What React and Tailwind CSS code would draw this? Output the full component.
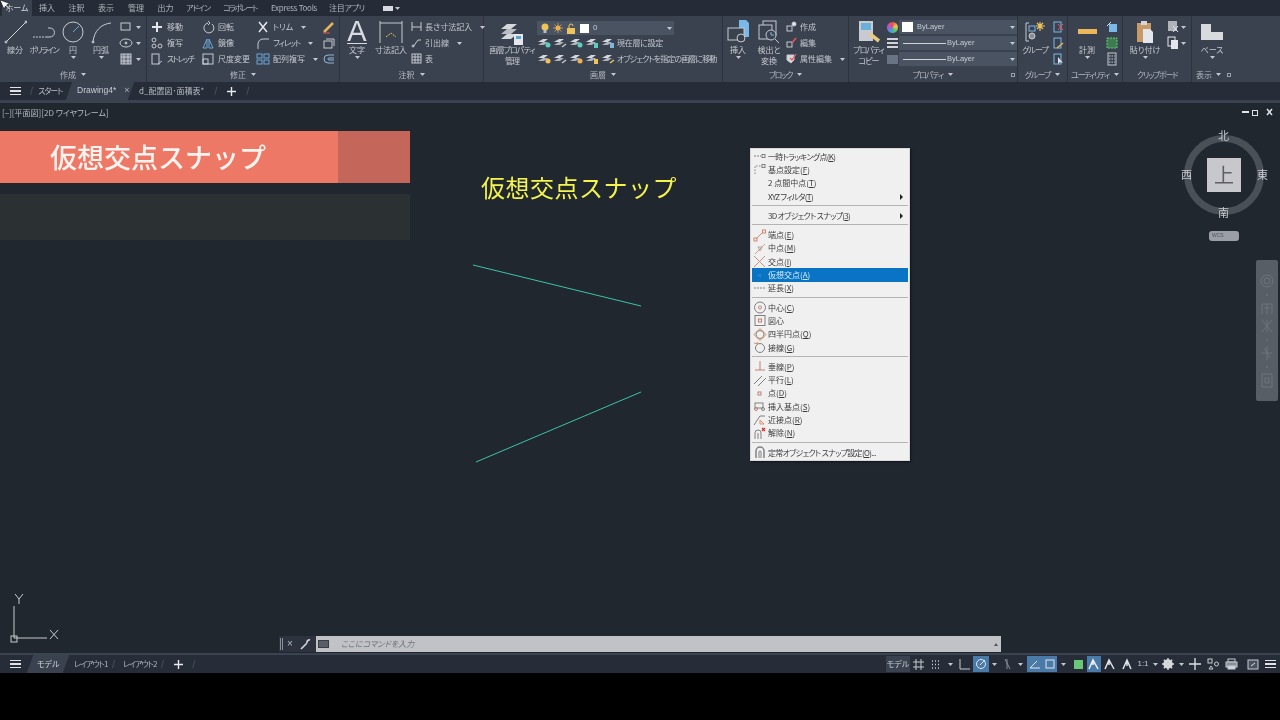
import React from "react";

const Caret = ({ className = "" }) => (
  <svg width="5" height="3" viewBox="0 0 5 3" className={`shrink-0 ${className}`}>
    <path d="M0 0h5L2.500 3z" fill="#c4c8ce" />
  </svg>
);

const Ico = ({ w = 14, h = 14, children, className = "" }) => (
  <svg width={w} height={h} viewBox={`0 0 ${w} ${h}`} fill="none" stroke="#c6cad0" strokeWidth="1" className={`shrink-0 ${className}`}>
    {children}
  </svg>
);

const Big = ({ w, label, icon, caret, className = "" }) => (
  <div className="flex flex-col items-center shrink-0" style={{ width: w }}>
    <div className="h-[25px] flex items-center justify-center">{icon}</div>
    <div className={`text-[8px] leading-[11px] text-center text-[#c4c8ce] whitespace-pre ${className}`}>{label}</div>
    {caret && <Caret className="mt-[1px]" />}
  </div>
);

const Tool = ({ icon, label, caret, tw = "" }) => (
  <div className="h-[16px] shrink-0 flex items-center gap-[3px]">
    {icon}
    <span className={`text-[8px] text-[#c4c8ce] whitespace-nowrap ${tw}`}>{label}</span>
    {caret && <Caret className="ml-[5px]" />}
  </div>
);

const Panel = ({ w, title, children, extra, tw = "" }) => (
  <div className="shrink-0 flex flex-col border-r border-[#2c333e]" style={{ width: w }}>
    <div className="h-[51px] flex pt-[3px]">{children}</div>
    <div className="h-[15px] flex items-center justify-center gap-[5px] relative">
      <span className={`text-[8px] text-[#b4b8c0] whitespace-nowrap ${tw}`}>{title}</span>
      <Caret />
      {extra}
    </div>
  </div>
);

const LayerIcon = ({ color = "#c6cad0", kind = "dot" }) => (
  <svg width="16" height="14" viewBox="0 0 16 14" className="shrink-0">
    <path d="M1 6l5-3h5l-4 3z" fill="#d4d7dc" />
    <path d="M1 9l5-3h5l-4 3z" fill="#aeb2b9" />
    {kind === "dot" && <circle cx="11" cy="9" r="2.500" fill={color} />}
    {kind === "lock" && <rect x="9" y="7" width="4" height="5" fill={color} />}
    {kind === "pen" && <path d="M9 11l4-3" stroke={color} strokeWidth="1.500" />}
  </svg>
);

const DropBox = ({ line, label }) => (
  <div className="h-[14px] shrink-0 w-[118px] bg-[#4a5362] flex items-center pl-[2px] pr-[2px] mb-[2px]">
    {line ? (
      <>
        <span className="w-[43px] h-[1px] bg-[#d0d2d6] ml-[2px] mr-[1px]" />
        <span className="text-[7.500px] text-[#c8ccd2] font-['Liberation_Sans']">{label}</span>
      </>
    ) : (
      <>
        <span className="w-[11px] h-[10px] bg-white mr-[4px] ml-[1px]" />
        <span className="text-[7.500px] text-[#c8ccd2] font-['Liberation_Sans']">{label}</span>
      </>
    )}
    <Caret className="ml-auto" />
  </div>
);

const topTabs = [
  ["挿入", 30, ""],
  ["注釈", 29, ""],
  ["表示", 30, ""],
  ["管理", 30, ""],
  ["出力", 29, ""],
  ["アドイン", 36, "tracking-[-1px]"],
  ["コラボレート", 48, "tracking-[-1.600px]"],
  ["Express Tools", 60, "tracking-[-0.300px]"],
  ["注目アプリ", 46, "tracking-[-0.300px]"],
];

const TopTabs = () => (
  <div className="h-[16px] bg-[#252c37] flex items-center pl-[2px] shrink-0">
    <div className="w-[30px] h-full bg-[#3a4250] flex items-center justify-center text-[8px] text-[#d0d3d8]">ホーム</div>
    {topTabs.map(([t, w, tw]) => (
      <div key={t} className={`text-[8px] text-center text-[#aeb2ba] whitespace-nowrap ${tw}`} style={{ width: w }}>
        {t}
      </div>
    ))}
    <div className="ml-[13px] flex items-center gap-[2px]">
      <span className="w-[10px] h-[5px] bg-[#d8dade]" />
      <Caret />
    </div>
  </div>
);

const SmallSq = ({ children }) => <Ico>{children}</Ico>;

const Ribbon = () => (
  <div className="h-[66px] bg-[#3a4250] flex shrink-0 overflow-hidden">
    <Panel w={147} title="作成">
      <div className="flex pl-[2px]">
        <Big w={26} label="線分" icon={<Ico w={24} h={24}><path d="M3 22L23 2" stroke="#d0d3d8" /><circle cx="3" cy="22" r="1" fill="#6aa8d8" /><circle cx="23" cy="2" r="1" fill="#6aa8d8" /></Ico>} />
        <Big w={32} label="ポリライン" className="tracking-[-1.300px]" icon={<Ico w={26} h={20}><path d="M2 15H16" strokeDasharray="2 1" /><path d="M17 6h2a4.500 4.500 0 0 1 0 9h-3" /></Ico>} />
        <Big w={26} label="円" caret icon={<Ico w={24} h={24}><circle cx="12" cy="12" r="10" /><path d="M12 12L18 6" stroke="#6aa8d8" /></Ico>} />
        <Big w={30} label="円弧" caret icon={<Ico w={24} h={24}><path d="M4 22C5 11 12 4 22 3" /><circle cx="4" cy="22" r="1" fill="#6aa8d8" /></Ico>} />
      </div>
      <div className="flex flex-col pl-[3px]">
        <Tool icon={<SmallSq><rect x="2" y="3" width="9" height="7" /></SmallSq>} label={<Caret />} />
        <Tool icon={<SmallSq><ellipse cx="7" cy="7" rx="6" ry="4" /><circle cx="7" cy="7" r="1" fill="#6aa8d8" /></SmallSq>} label={<Caret />} />
        <Tool icon={<SmallSq><rect x="2" y="2" width="10" height="10" fill="#6a7382" /><path d="M2 5h10M2 9h10M5 2v10M9 2v10" /></SmallSq>} label={<Caret />} />
      </div>
    </Panel>

    <Panel w={193} title="修正">
      <div className="flex pl-[3px]">
        <div className="w-[51px] flex flex-col">
          <Tool label="移動" icon={<SmallSq><path d="M7 2v10M2 7h10" strokeWidth="2" stroke="#e4e6ea" /></SmallSq>} />
          <Tool label="複写" icon={<SmallSq><circle cx="4" cy="4" r="2" /><circle cx="10" cy="10" r="2" /><circle cx="4" cy="10" r="2" /></SmallSq>} />
          <Tool label="ストレッチ" tw="tracking-[-1.400px]" icon={<SmallSq><rect x="2" y="2" width="7" height="10" /><path d="M8 12l4-3" /></SmallSq>} />
        </div>
        <div className="w-[55px] flex flex-col">
          <Tool label="回転" icon={<SmallSq><path d="M11 4a5 5 0 1 1-4-1" /><path d="M7 1l2 2-2 2" /></SmallSq>} />
          <Tool label="鏡像" icon={<SmallSq><path d="M6 3L2 12h4zM8 3l4 9H8z" stroke="#6aa8d8" /></SmallSq>} />
          <Tool label="尺度変更" icon={<SmallSq><rect x="2" y="2" width="10" height="10" /><rect x="2" y="7" width="5" height="5" /></SmallSq>} />
        </div>
        <div className="w-[66px] flex flex-col">
          <Tool label="トリム" caret icon={<SmallSq><path d="M3 2l8 10M11 2L3 12" stroke="#e4e6ea" strokeWidth="1.500" /></SmallSq>} />
          <Tool label="フィレット" caret tw="tracking-[-1px]" icon={<SmallSq><path d="M2 13V8a5 5 0 0 1 5-5h6" /></SmallSq>} />
          <Tool label="配列複写" caret icon={<SmallSq><rect x="1" y="2" width="5" height="4" stroke="#6aa8d8" /><rect x="8" y="2" width="5" height="4" stroke="#6aa8d8" /><rect x="1" y="8" width="5" height="4" stroke="#6aa8d8" /><rect x="8" y="8" width="5" height="4" stroke="#6aa8d8" /></SmallSq>} />
        </div>
        <div className="flex flex-col">
          <div className="h-[16px] shrink-0 flex items-center"><SmallSq><path d="M2 12L11 3" stroke="#e8b35a" strokeWidth="2.500" /><path d="M1 13h7" stroke="#d65a5a" /></SmallSq></div>
          <div className="h-[16px] shrink-0 flex items-center"><SmallSq><rect x="2" y="5" width="8" height="7" /><path d="M4 3h8v7" /></SmallSq></div>
          <div className="h-[16px] shrink-0 flex items-center"><SmallSq><path d="M12 3H6a4 4 0 0 0 0 8h6M12 6H7a1 1 0 0 0 0 2h5" stroke="#8fb7d8" /></SmallSq></div>
        </div>
      </div>
    </Panel>

    <Panel w={144} title="注釈">
      <div className="flex">
        <Big w={34} label="文字" caret icon={
          <svg width="24" height="24" viewBox="0 0 24 24">
            <text x="12" y="21" textAnchor="middle" fontSize="29" fill="#d8dce2" fontFamily="Liberation Sans">A</text>
            <path d="M2 23.500h20" stroke="#d8dce2" />
          </svg>
        } />
        <Big w={34} label="寸法記入" icon={<Ico w={24} h={24}><path d="M1 1v22M23 1v22M1 3h22" /><path d="M7 17l5-4 5 4" stroke="#e4c84a" strokeDasharray="2 1" /></Ico>} />
        <div className="flex flex-col pl-[3px]">
          <Tool label="長さ寸法記入" caret icon={<Ico w={11}><path d="M1 2v9M10 2v9M1 7h9" /></Ico>} />
          <Tool label="引出線" caret icon={<Ico w={11}><path d="M2 11l5-7h3" /><circle cx="2" cy="10" r="1" /></Ico>} />
          <Tool label="表" icon={<Ico w={11}><rect x="1" y="2" width="9" height="9" /><path d="M1 5h9M1 8h9M4 2v9M7 2v9" /></Ico>} />
        </div>
      </div>
    </Panel>

    <Panel w={239} title="画層">
      <div className="flex pl-[3px]">
        <Big
          w={50}
          label={"画層プロパティ\n管理"}
          className="tracking-[-0.900px]"
          icon={
            <svg width="24" height="24" viewBox="0 0 24 24" className="mt-[2px]">
              <path d="M1 8l6-5h10l-6 5z" fill="#d4d7dc" />
              <path d="M1 13l6-5h10l-6 5z" fill="#b9bcc2" />
              <path d="M1 18l6-5h10l-6 5z" fill="#d4d7dc" />
              <rect x="14" y="13" width="9" height="11" fill="#e4e6ea" />
              <rect x="16" y="15" width="5" height="3" fill="#5aa0d0" />
            </svg>
          }
        />
        <div className="flex flex-col">
          <div className="h-[14px] shrink-0 w-[137px] mt-[2px] bg-[#4a5362] flex items-center pl-[3px] pr-[2px] gap-[3px]">
            <svg width="10" height="11" viewBox="0 0 10 11"><circle cx="5" cy="4" r="3.500" fill="#eec45a" /><rect x="3.500" y="7" width="3" height="3" fill="#b9bcc2" /></svg>
            <svg width="10" height="10" viewBox="0 0 10 10"><circle cx="5" cy="5" r="2.500" fill="#eeb050" /><path d="M5 0v10M0 5h10M1.500 1.500l7 7M8.500 1.500l-7 7" stroke="#eeb050" strokeWidth="0.700" /></svg>
            <svg width="10" height="11" viewBox="0 0 10 11"><rect x="1" y="5" width="8" height="6" fill="#eec45a" /><path d="M3 5V3a2 2 0 0 1 4 0" stroke="#eec45a" fill="none" /></svg>
            <span className="w-[9px] h-[9px] bg-white ml-[1px]" />
            <span className="text-[8px] text-[#c8ccd2] font-['Liberation_Sans'] ml-[1px]">0</span>
            <Caret className="ml-auto" />
          </div>
          <div className="h-[16px] shrink-0 flex items-center">
            <LayerIcon color="#5ad0c0" />
            <LayerIcon kind="pen" />
            <LayerIcon color="#5ad0c0" />
            <LayerIcon kind="lock" color="#5ad0c0" />
            <LayerIcon kind="lock" color="#7ab8e0" />
            <span className="text-[8px] text-[#c4c8ce] whitespace-nowrap tracking-[-0.300px]">現在層に設定</span>
          </div>
          <div className="h-[16px] shrink-0 flex items-center">
            <LayerIcon color="#eec45a" />
            <LayerIcon kind="pen" />
            <LayerIcon color="#eeb050" />
            <LayerIcon kind="lock" color="#eec45a" />
            <LayerIcon kind="pen" color="#eec45a" />
            <span className="text-[8px] text-[#c4c8ce] whitespace-nowrap tracking-[-0.900px]">オブジェクトを指定の画層に移動</span>
          </div>
        </div>
      </div>
    </Panel>

    <Panel w={126} title="ブロック" tw="tracking-[-1.300px]">
      <div className="flex">
        <Big w={30} label="挿入" caret icon={
          <svg width="22" height="24" viewBox="0 0 22 24"><path d="M12 0h7l3 3v14H12z" fill="#7ab8e8" /><rect x="1" y="8" width="16" height="12" fill="#3a4250" stroke="#c6cad0" /><circle cx="14" cy="18" r="4" fill="#3a4250" stroke="#c6cad0" /></svg>
        } />
        <Big w={32} label={"検出と\n変換"} icon={
          <svg width="22" height="24" viewBox="0 0 22 24" fill="none" stroke="#c6cad0"><rect x="5" y="1" width="13" height="14" /><rect x="1" y="5" width="13" height="14" fill="#3a4250" /><circle cx="13" cy="15" r="5" fill="#3a4250" /><path d="M13 12v3h3" stroke="#7ab8e8" /><path d="M17 19l4 4" /></svg>
        } />
        <div className="flex flex-col pl-[1px]">
          <Tool label="作成" icon={<Ico w={11}><rect x="1" y="6" width="5" height="5" /><circle cx="8" cy="4" r="2" fill="#e4e6ea" /></Ico>} />
          <Tool label="編集" icon={<Ico w={11}><rect x="1" y="6" width="5" height="5" /><path d="M6 7l4-5" stroke="#e45a5a" strokeWidth="1.500" /></Ico>} />
          <Tool label="属性編集" caret icon={<Ico w={11}><path d="M1 3h7v5l-3 3-4-3z" fill="#d4d7dc" /><path d="M4 6l2 2 4-6" stroke="#e45a5a" strokeWidth="1.300" /></Ico>} />
        </div>
      </div>
    </Panel>

    <Panel w={169} title="プロパティ" tw="tracking-[-1px]" extra={<span className="absolute right-[2px] w-[4px] h-[4px] border border-[#9a9ea6]" />}>
      <div className="flex pl-[1px]">
        <Big w={37} label={"プロパティ\nコピー"} className="tracking-[-1px]" icon={
          <svg width="24" height="24" viewBox="0 0 24 24" className="mt-[1px]"><rect x="2" y="1" width="14" height="20" fill="#c8ccd2" /><rect x="4" y="3" width="10" height="7" fill="#6ab0d8" /><path d="M13 14l9 7" stroke="#e8cc80" strokeWidth="3.500" /></svg>
        } />
        <div className="w-[11px] flex flex-col items-center">
          <div className="h-[16px] shrink-0 flex items-center"><span className="w-[11px] h-[11px] rounded-full bg-[conic-gradient(#e85050,#e8c850,#50c870,#5090e8,#c050c8,#e85050)]" /></div>
          <div className="h-[16px] shrink-0 flex flex-col justify-center gap-[2px]"><span className="w-[11px] h-[2px] bg-[#d0d3d8]" /><span className="w-[11px] h-[2px] bg-[#d0d3d8]" /><span className="w-[11px] h-[2px] bg-[#d0d3d8]" /></div>
          <div className="h-[16px] shrink-0 flex items-center"><span className="w-[11px] h-[9px] bg-[#6a7382]" /></div>
        </div>
        <div className="flex flex-col ml-[1px] mt-[1px]">
          <DropBox label="ByLayer" />
          <DropBox line label="ByLayer" />
          <DropBox line label="ByLayer" />
        </div>
      </div>
    </Panel>

    <Panel w={50} title="グループ" tw="tracking-[-1px]">
      <Big w={34} label="グループ" className="tracking-[-1px]" icon={
        <svg width="20" height="22" viewBox="0 0 20 22" fill="none" stroke="#c6cad0"><path d="M4 2H1v18h3" /><rect x="4" y="5" width="6" height="5" stroke="#7ab8e8" /><circle cx="7" cy="15" r="3" fill="#8a8f98" /><path d="M15 1v9M11 5h9M12 2l6 6M18 2l-6 6" stroke="#eec45a" strokeWidth="1.200" /></svg>
      } />
      <div className="flex flex-col">
        <div className="h-[16px] shrink-0 flex items-center"><Ico w={12}><rect x="2" y="2" width="7" height="10" stroke="#7ab8e8" /><path d="M6 4l5 6M11 4l-5 6" stroke="#e45a5a" /></Ico></div>
        <div className="h-[16px] shrink-0 flex items-center"><Ico w={12}><rect x="2" y="2" width="7" height="10" stroke="#7ab8e8" /><path d="M5 12l6-5" stroke="#e8b35a" strokeWidth="1.500" /></Ico></div>
        <div className="h-[16px] shrink-0 flex items-center"><Ico w={12}><rect x="2" y="2" width="7" height="10" stroke="#7ab8e8" /><path d="M6 5v7l2-2 3 1z" fill="#e4e6ea" stroke="none" /></Ico></div>
      </div>
    </Panel>

    <Panel w={55} title="ユーティリティ" tw="tracking-[-1.500px]">
      <Big w={38} label="計測" caret icon={<span className="w-[19px] h-[5px] bg-[#eab85a] mt-[-1px]" />} />
      <div className="flex flex-col">
        <div className="h-[16px] shrink-0 flex items-center"><Ico w={12}><rect x="3" y="4" width="8" height="8" fill="#7ab8e8" stroke="none" /><path d="M1 6l4-4" stroke="#e4e6ea" /></Ico></div>
        <div className="h-[16px] shrink-0 flex items-center"><Ico w={12}><rect x="1" y="2" width="10" height="10" fill="#3f7a50" stroke="#5ad070" strokeDasharray="2 1" /></Ico></div>
        <div className="h-[16px] shrink-0 flex items-center"><Ico w={12}><rect x="2" y="1" width="8" height="12" /><path d="M3 4h6M3 7h6M3 10h6" strokeDasharray="1.500 1" /></Ico></div>
      </div>
    </Panel>

    <div className="w-[69px] shrink-0 flex flex-col border-r border-[#2c333e]">
      <div className="h-[51px] flex pt-[3px]">
        <Big w={44} label="貼り付け" caret icon={
          <svg width="18" height="24" viewBox="0 0 18 24"><rect x="1" y="3" width="14" height="19" fill="#c89a68" /><rect x="5" y="1" width="6" height="4" fill="#d4d7dc" /><path d="M7 9h7l3 3v11H7z" fill="#e4e6ea" /></svg>
        } />
        <div className="flex flex-col">
          <div className="h-[16px] shrink-0 flex items-center gap-[2px]"><Ico w={12}><rect x="1" y="1" width="9" height="10" fill="#b0b4ba" stroke="none" /><path d="M6 6l5 6M11 6l-5 6" stroke="#e4e6ea" /></Ico><Caret /></div>
          <div className="h-[16px] shrink-0 flex items-center gap-[2px]"><Ico w={12}><rect x="1" y="1" width="7" height="9" stroke="#e4e6ea" /><rect x="4" y="4" width="7" height="9" fill="#e4e6ea" stroke="none" /></Ico><Caret /></div>
        </div>
      </div>
      <div className="h-[15px] flex items-center justify-center text-[8px] text-[#b4b8c0] tracking-[-1.300px]">クリップボード</div>
    </div>

    <div className="flex-1 flex flex-col">
      <div className="h-[51px] pt-[3px] flex">
        <Big w={40} label="ベース" caret icon={
          <svg width="22" height="16" viewBox="0 0 22 16"><path d="M0 0h10v8h12v8H0z" fill="#d8dade" /></svg>
        } />
      </div>
      <div className="h-[15px] flex items-center pl-[4px] gap-[4px]">
        <span className="text-[8px] text-[#b4b8c0]">表示</span>
        <Caret />
        <span className="w-[4px] h-[4px] border border-[#9a9ea6] ml-[2px]" />
      </div>
    </div>
  </div>
);

const Burger = () => (
  <div className="w-[11px] flex flex-col gap-[2px]">
    <span className="h-[1.500px] bg-[#e0e2e6]" />
    <span className="h-[1.500px] bg-[#e0e2e6]" />
    <span className="h-[1.500px] bg-[#e0e2e6]" />
  </div>
);

const Plus = () => <Ico w={11} h={11}><path d="M5.500 1v9M1 5.500h9" stroke="#e8eaee" strokeWidth="1.400" /></Ico>;
const Slash = ({ className = "" }) => <span className={`text-[11px] text-[#4a5260] font-['Liberation_Sans'] ${className}`}>/</span>;

const DocTabs = () => (
  <div className="h-[18px] bg-[#262d38] flex items-center shrink-0 pl-[10px]">
    <Burger />
    <Slash className="ml-[9px]" />
    <span className="ml-[5px] w-[24px] text-[8px] text-[#b8bcc4] whitespace-nowrap tracking-[-1px]">スタート</span>
    <div className="ml-[7px] w-[62px] h-full bg-[#3a4250] -skew-x-[20deg] flex items-center justify-center">
      <div className="skew-x-[20deg] flex items-center gap-[8px] text-[8.500px] text-[#c8ccd2] font-['Liberation_Sans'] ml-[6px]">
        <span>Drawing4*</span>
        <span className="text-[9px] text-[#a8acb4]">×</span>
      </div>
    </div>
    <span className="ml-[8px] text-[8px] text-[#b8bcc4] whitespace-nowrap">d_配置図･面積表*</span>
    <Slash className="ml-[10px]" />
    <span className="ml-[9px] flex"><Plus /></span>
    <Slash className="ml-[9px]" />
  </div>
);

const menuIcons = {
  track: <><path d="M1 6h7" strokeDasharray="2 1" /><rect x="9" y="4.500" width="3" height="3" /></>,
  base: <><path d="M2 11V3h7" strokeDasharray="1.500 1.500" /><rect x="9" y="1.500" width="3" height="3" /></>,
  end: <><path d="M3 10l7-7" stroke="#d08a70" /><rect x="1" y="9" width="3" height="3" stroke="#d08a70" /><rect x="9.500" y="1" width="3" height="3" stroke="#d08a70" /></>,
  mid: <><path d="M2 12L12 2" stroke="#d0a090" /><path d="M5 5l2 4 2-4z" stroke="#b8a090" /></>,
  inter: <path d="M1 1l11 11M12 1L1 12" stroke="#c89080" />,
  app: <path d="M5 5l3 3M8 5l-3 3" stroke="#3a8fd0" />,
  ext: <path d="M1 6h12" strokeDasharray="2 1" />,
  center: <><circle cx="7" cy="6.500" r="5.500" /><circle cx="7" cy="6.500" r="1.500" stroke="#c08070" /></>,
  centroid: <><rect x="2" y="1.500" width="10" height="10" /><rect x="5.500" y="5" width="3" height="3" stroke="#c08070" /></>,
  quad: <><circle cx="7" cy="6.500" r="4" /><path d="M7 0.500L13 6.500 7 12.500 1 6.500z" stroke="#d89060" /></>,
  tan: <><circle cx="7" cy="7" r="4.500" /><path d="M1 2l4 1-1-2" stroke="#d89060" /></>,
  perp: <path d="M7 1v9M2 10h10" stroke="#c08070" />,
  par: <path d="M1 10L9 2M5 12l8-8" />,
  node: <rect x="5" y="5" width="3" height="3" stroke="#c08070" />,
  ins: <><rect x="2" y="3" width="8" height="5" /><circle cx="3" cy="9" r="1.500" stroke="#c08070" /><circle cx="10" cy="9" r="1.500" /></>,
  near: <><path d="M1 12l6-9h5" /><path d="M7 7l4 4-4 0z" stroke="#d89060" /></>,
  none: <><path d="M2 12V6a3 3 0 0 1 6 0v6M5 12V6" /><path d="M9 1l3 3M12 1L9 4" stroke="#d03030" strokeWidth="1.300" /></>,
  set: <><path d="M3 12V5a4 4 0 0 1 8 0v7" strokeWidth="1.500" /><path d="M6 12V6a1 1 0 0 1 2 0v6" /></>,
};

const groups = [
  [
    ["track", "一時トラッキング点", "K"],
    ["base", "基点設定", "F"],
    [null, "2 点間中点", "T"],
    [null, "XYZ フィルタ", "T", true],
  ],
  [[null, "3D オブジェクト スナップ", "3", true]],
  [
    ["end", "端点", "E"],
    ["mid", "中点", "M"],
    ["inter", "交点", "I"],
    ["app", "仮想交点", "A"],
    ["ext", "延長", "X"],
  ],
  [
    ["center", "中心", "C"],
    ["centroid", "図心"],
    ["quad", "四半円点", "Q"],
    ["tan", "接線", "G"],
  ],
  [
    ["perp", "垂線", "P"],
    ["par", "平行", "L"],
    ["node", "点", "D"],
    ["ins", "挿入基点", "S"],
    ["near", "近接点", "R"],
    ["none", "解除", "N"],
  ],
  [["set", "定常オブジェクト スナップ設定", "O", false, "..."]],
];

const SnapMenu = () => (
  <div className="absolute left-[750px] top-[45px] w-[160px] h-[313px] bg-[#f0f0f0] border border-[#d8d8d8] p-[1px] shadow-[1px_1px_2px_#00000080]">
    {groups.map((rows, gi) => (
      <div key={gi} className={gi > 0 ? "border-t border-[#b4b4b4] mt-[2px] pt-[3px]" : ""}>
        {rows.map(([icon, label, key, sub, tail]) => {
          const active = label === "仮想交点";
          const kana = /[ァ-ヶ]/.test(label);
          return (
            <div key={label} className={`h-[13.300px] flex items-center pl-[1px] ${active ? "bg-[#0a74c4] text-[#d8ecf8]" : "text-[#3c3c3c]"}`}>
              <Ico className="mr-[1px]" w={14} h={13}>
                {icon ? <g stroke={active ? "#3a8fd0" : "#808080"}>{menuIcons[icon]}</g> : null}
              </Ico>
              <span className={`text-[8px] leading-none whitespace-nowrap ${kana ? "tracking-[-0.700px]" : ""}`}>
                {label}
                {key && (
                  <>
                    (<u>{key}</u>)
                  </>
                )}
                {tail}
              </span>
              {sub && <span className="ml-auto mr-[5px] w-0 h-0 border-y-[3px] border-y-transparent border-l-[3px] border-l-[#222]" />}
            </div>
          );
        })}
      </div>
    ))}
  </div>
);

const ViewCube = () => (
  <div className="absolute right-[16px] top-[23px] w-[80px] h-[120px] flex flex-col items-center">
    <div className="relative w-[80px] h-[92px] mt-[2px] shrink-0">
      <div className="absolute left-0 top-[7px] w-[80px] h-[80px] rounded-full border-[7px] border-[#4a5058]" />
      <div className="absolute left-[23px] top-[30px] w-[34px] h-[34px] bg-[#c8c8cc] flex items-center justify-center text-[20px] text-[#5c6068]">上</div>
      <span className="absolute left-[34px] top-[2px] text-[11px] leading-none text-[#c8cacf]">北</span>
      <span className="absolute left-[34px] top-[79px] text-[11px] leading-none text-[#c8cacf]">南</span>
      <span className="absolute left-[-3px] top-[41px] text-[11px] leading-none text-[#c8cacf]">西</span>
      <span className="absolute left-[73px] top-[41px] text-[11px] leading-none text-[#c8cacf]">東</span>
    </div>
    <div className="w-[30px] h-[10px] mt-[11px] shrink-0 rounded-[3px] bg-[#9a9ea6] flex items-center pl-[3px] text-[5px] text-[#50545c] font-['Liberation_Sans']">WCS</div>
  </div>
);

const Viewport = () => (
  <div className="relative flex-1 bg-[#20272f] overflow-hidden">
    <div className="h-[19px] pl-[2px] flex items-center text-[8px] text-[#b8bcc4] whitespace-nowrap">[−][平面図][2D ワイヤフレーム]</div>

    <div className="mt-[9px] w-[410px] h-[52px] flex bg-[#ee7866] shrink-0">
      <div className="w-[338px] pl-[50px] flex items-center text-[27px] font-medium text-[#fdf3ef] whitespace-nowrap [font-feature-settings:normal]">仮想交点スナップ</div>
      <div className="flex-1 bg-[#c4675a]" />
    </div>
    <div className="mt-[11px] w-[410px] h-[46px] bg-[#2b3033]" />

    <div className="absolute left-[481px] top-[67px] text-[24px] leading-[34px] tracking-[0.500px] text-[#f4f44c] whitespace-nowrap [font-feature-settings:normal]">仮想交点スナップ</div>

    {/* 作図線 */}
    <svg className="absolute left-0 top-0" width="1280" height="550" fill="none">
      <path d="M473 162L641 203M476 359L641 289" stroke="#3cc4a8" strokeWidth="1" />
      <path d="M14 503V535H47" stroke="#c8cace" strokeWidth="1" />
      <rect x="11" y="533" width="6" height="6" stroke="#c8cace" />
      <path d="M15 491l4 5 4-5M19 496v5M50 527l8 9M58 527l-8 9" stroke="#c8cace" />
      <path d="M1242 9h7" stroke="#e0e2e6" strokeWidth="2" />
      <rect x="1252.500" y="7.500" width="5" height="5" stroke="#e0e2e6" />
      <path d="M1267 6l5 6M1272 6l-5 6" stroke="#e0e2e6" strokeWidth="1.500" />
    </svg>

    <SnapMenu />
    <ViewCube />

    <div className="absolute right-[2px] top-[157px] w-[22px] h-[141px] rounded-[2px] bg-[#585e66] flex justify-center pt-[10px]">
      <svg width="16" height="120" viewBox="0 0 16 120" fill="none" stroke="#6e747c">
        <circle cx="8" cy="11" r="6" />
        <circle cx="8" cy="11" r="3" />
        <circle cx="8" cy="25" r="0.600" />
        <path d="M3 44V34h10v10M5 38h6M8 34v10" />
        <path d="M3 50l10 12M13 50L3 62M8 50v12" />
        <circle cx="8" cy="70" r="0.600" />
        <path d="M8 76v14M3 83h10M5 78l6 10" />
        <circle cx="8" cy="97" r="0.600" />
        <path d="M3 104h10v13H3zM6 108h4v5H6z" />
      </svg>
    </div>

    <div className="absolute left-[279px] top-[533px] flex items-center h-[16px]">
      <div className="w-[37px] h-full bg-[#2c333e] flex items-center pl-[1px] gap-[4px]">
        <span className="w-[3px] h-[12px] border-x border-[#8a8f98]" />
        <span className="text-[10px] leading-none text-[#b4b8c0] font-['Liberation_Sans']">×</span>
        <Ico w={11} h={11} className="ml-[3px]"><path d="M1 10l6-6M7 4a2.500 2.500 0 0 1 3-3" stroke="#d0d3d8" strokeWidth="1.700" /></Ico>
      </div>
      <div className="w-[685px] h-full bg-[#c1c2c6] flex items-center pl-[2px] pr-[2px]">
        <span className="w-[11px] h-[8px] bg-[#5a5e66] border border-[#3a3e46]" />
        <Caret className="ml-[1px]" />
        <span className="ml-[6px] text-[8px] italic text-[#70747a]">ここにコマンドを入力</span>
        <span className="ml-auto mr-[1px] w-0 h-0 border-x-[2.500px] border-x-transparent border-b-[3px] border-b-[#50545c]" />
      </div>
    </div>
  </div>
);

const St = ({ w, on, dark, children }) => (
  <div className={`h-[16px] flex items-center justify-center shrink-0 ${on ? "bg-[#4a7ba8]" : dark ? "bg-[#3a4250]" : ""}`} style={{ width: w }}>
    {children}
  </div>
);

const StatusIcons = () => (
  <div className="ml-auto flex items-center pr-[1px]">
    <St w={24} dark><span className="text-[8px] text-[#c8ccd2]">モデル</span></St>
    <St w={17}><Ico w={11} h={11}><path d="M3 0v11M8 0v11M0 3h11M0 8h11" /></Ico></St>
    <St w={17}><Ico w={11} h={11}><path d="M2 2h8M2 5.500h8M2 9h8" strokeDasharray="1 2" strokeWidth="1.300" /></Ico></St>
    <St w={12}><Caret /></St>
    <St w={17}><Ico w={12} h={12}><path d="M1 1v10h10" /></Ico></St>
    <St w={16} on><Ico w={12} h={12}><circle cx="6" cy="6" r="4.500" stroke="#dfe6ee" /><path d="M5 7l5-5" stroke="#dfe6ee" /></Ico></St>
    <St w={11}><Caret /></St>
    <St w={14}><Ico w={10} h={12}><path d="M3 1l5 10M5 1v10" stroke="#8a8f98" /></Ico></St>
    <St w={13}><Caret /></St>
    <St w={15} on><Ico w={12} h={12}><path d="M1 10h10M1 10l7-7" stroke="#dfe6ee" /></Ico></St>
    <St w={15} on><Ico w={12} h={12}><rect x="2" y="2" width="8" height="8" stroke="#dfe6ee" /></Ico></St>
    <St w={12}><Caret /></St>
    <St w={18}><span className="w-[9px] h-[9px] bg-[#68c878]" /></St>
    <St w={14} on><Ico w={12} h={12}><path d="M1 11l4-9 5 9M5 2v5" stroke="#f0f2f4" strokeWidth="1.500" /></Ico></St>
    <St w={18}><Ico w={12} h={12}><path d="M1 11l4-9 5 9M5 2v5" stroke="#e0e2e6" strokeWidth="1.500" /></Ico></St>
    <St w={16}><Ico w={12} h={12}><path d="M2 11l4-9 4 9M6 2v6" stroke="#e0e2e6" strokeWidth="1.500" /></Ico></St>
    <St w={16}><span className="text-[8px] text-[#c8ccd2] font-['Liberation_Sans']">1:1</span></St>
    <St w={8}><Caret /></St>
    <St w={18}><svg width="12" height="12" viewBox="0 0 12 12"><circle cx="6" cy="6" r="3.500" fill="none" stroke="#d8dade" strokeWidth="2.500" /><path d="M6 0v12M0 6h12M1.800 1.800l8.400 8.400M10.200 1.800l-8.400 8.400" stroke="#d8dade" strokeWidth="1.300" /></svg></St>
    <St w={8}><Caret /></St>
    <St w={20}><Ico w={12} h={12}><path d="M6 0v12M0 6h12" stroke="#e0e2e6" strokeWidth="1.300" /></Ico></St>
    <St w={15}><Ico w={12} h={12}><rect x="1" y="1" width="4" height="4" /><circle cx="9.500" cy="6" r="2" /><path d="M4 8l2 3H2z" /></Ico></St>
    <St w={23}><Ico w={13} h={12}><rect x="3" y="1" width="7" height="3" /><rect x="1" y="4" width="11" height="5" fill="#8a8f98" /><rect x="3" y="8" width="7" height="3" fill="#d0d3d8" /></Ico></St>
    <St w={19}><Ico w={12} h={11}><rect x="1" y="1" width="10" height="9" fill="#4a5260" /><path d="M4 7l4-3" stroke="#e0e2e6" /></Ico></St>
    <St w={17}><Burger /></St>
  </div>
);

const StatusBar = () => (
  <div className="h-[18px] bg-[#262d38] flex items-center pl-[10px] shrink-0">
    <Burger />
    <div className="ml-[9px] w-[36px] h-full bg-[#3a4250] -skew-x-[20deg] flex items-center justify-center">
      <span className="skew-x-[20deg] text-[8px] text-[#d0d3d8]">モデル</span>
    </div>
    <span className="ml-[8px] w-[33px] text-[8px] text-[#b0b4bc] whitespace-nowrap tracking-[-1px]">レイアウト1</span>
    <Slash className="ml-[5px]" />
    <span className="ml-[8px] w-[33px] text-[8px] text-[#b0b4bc] whitespace-nowrap tracking-[-1px]">レイアウト2</span>
    <Slash className="ml-[5px]" />
    <span className="ml-[9px] flex"><Plus /></span>
    <Slash className="ml-[8px]" />
    <StatusIcons />
  </div>
);

export default function App() {
  return (
    <div className="relative w-[1280px] h-[720px] bg-black overflow-hidden flex flex-col font-['Noto_Sans_CJK_JP','Liberation_Sans',sans-serif] [font-feature-settings:'palt'] blur-[0.3px]">
      <TopTabs />
      <Ribbon />
      <DocTabs />
      <div className="h-[3px] bg-[#3a434f] shrink-0" />
      <Viewport />
      <div className="h-[2px] bg-[#3a434f] shrink-0" />
      <StatusBar />
      <div className="h-[47px] shrink-0" />
      {/* マウスカーソル */}
      <svg className="absolute left-0 top-0" width="12" height="12" viewBox="0 0 12 12">
        <path d="M0 0l4 9 1.500-3 4 4 1-1-4-4 3-1.500z" fill="#fff" stroke="#000" strokeWidth="0.500" />
      </svg>
    </div>
  );
}
